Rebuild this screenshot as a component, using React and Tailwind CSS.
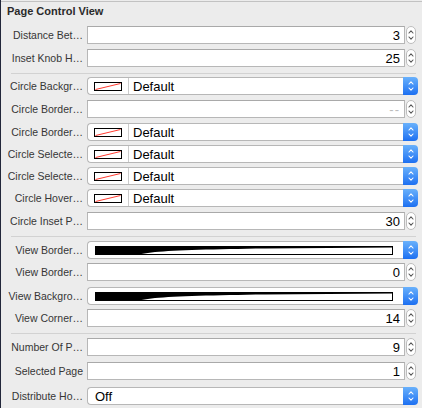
function Chevrons({ color = '#555', w = 6 }) {
  return (
    <svg width={w} height="12" viewBox="0 0 6 12" fill="none" stroke={color} strokeWidth="1.1" strokeLinecap="round" strokeLinejoin="round">
      <path d="M1 4 L3 1.8 L5 4" />
      <path d="M1 8 L3 10.2 L5 8" />
    </svg>
  )
}

function Label({ text }) {
  return (
    <div className="w-[86px] shrink-0 pr-[4px] text-right whitespace-nowrap text-[10.5px] leading-none text-[#363636]">
      {text}
    </div>
  )
}

function Stepper() {
  return (
    <div className="ml-px flex h-[18px] w-[10px] items-center justify-center rounded-full border border-[#bdbdbd] bg-white">
      <Chevrons w={6} />
    </div>
  )
}

function NumberRow({ label, value, placeholder, mt }) {
  return (
    <div className={`flex h-[18px] items-center ${mt}`}>
      <Label text={label} />
      <div className="flex h-[18px] w-[318px] items-center justify-end border border-[#b7b7b7] border-t-[#a9a9a9] bg-white pr-[4px] text-[13px] leading-none">
        {placeholder ? <span className="text-[#bcbcbc] tracking-[1px]">--</span> : <span className="text-black">{value}</span>}
      </div>
      <Stepper />
    </div>
  )
}

function BlueButton() {
  return (
    <div className="flex h-[18px] w-[15px] items-center justify-center rounded-r-[4px] bg-linear-to-b from-[#69b1fb] to-[#1c6ff1]">
      <Chevrons color="#ffffff" />
    </div>
  )
}

function Swatch() {
  return (
    <svg width="28" height="9" viewBox="0 0 28 9">
      <rect x="0.5" y="0.5" width="27" height="8" fill="#fff" stroke="#000" strokeWidth="1" />
      <line x1="1.5" y1="7.5" x2="26.5" y2="1.5" stroke="#ff3b30" strokeWidth="1" />
    </svg>
  )
}

function Wedge() {
  return (
    <svg width="298" height="9" viewBox="0 0 298 9">
      <rect x="0.5" y="0.5" width="297" height="8" fill="#fff" stroke="#000" strokeWidth="1" />
      <path d="M0 0 L298 0 L298 1.6 L170 2.4 C120 3 80 4 60 6 C50 7.5 42 9 36 9 L0 9 Z" fill="#000" />
    </svg>
  )
}

function PopupRow({ label, mt, type, text }) {
  return (
    <div className={`flex h-[18px] items-center ${mt}`}>
      <Label text={label} />
      <div className="flex h-[18px] w-[316px] items-center rounded-l-[4px] border border-r-0 border-[#b7b7b7] bg-white text-[13px] leading-none text-black">
        {type === 'color' && (
          <>
            <div className="ml-[6px] flex items-center"><Swatch /></div>
            <div className="ml-[6px] h-full w-px bg-[#cccccc]" />
            <span className="ml-[4px]">Default</span>
          </>
        )}
        {type === 'wedge' && (
          <div className="ml-[7px] flex items-center"><Wedge /></div>
        )}
        {type === 'text' && <span className="ml-[7px]">{text}</span>}
      </div>
      <BlueButton />
    </div>
  )
}

function Sep({ mt }) {
  return <div className={`ml-[10px] h-px w-[405px] bg-[#d2d2d2] ${mt}`} />
}

export default function App() {
  return (
    <div className="h-[408px] w-[422px] overflow-hidden border-l border-[#22273a] bg-[#ececec] font-['Liberation_Sans',Arial,sans-serif]">
      <div className="h-px" />
      <div className="h-px bg-[#c2c2c2]" />
      <div className="flex h-[19px] items-center pl-[6px] text-[11px] font-bold leading-none text-[#2a2a2a]">
        Page Control View
      </div>

      <NumberRow mt="mt-[5px]" label="Distance Bet…" value="3" />
      <NumberRow mt="mt-[5px]" label="Inset Knob H…" value="25" />
      <Sep mt="mt-[6px]" />
      <PopupRow mt="mt-[3px]" label="Circle Backgr…" type="color" />
      <NumberRow mt="mt-[5px]" label="Circle Border…" placeholder />
      <PopupRow mt="mt-[5px]" label="Circle Border…" type="color" />
      <PopupRow mt="mt-[4px]" label="Circle Selecte…" type="color" />
      <PopupRow mt="mt-[4px]" label="Circle Selecte…" type="color" />
      <PopupRow mt="mt-[4px]" label="Circle Hover…" type="color" />
      <NumberRow mt="mt-[5px]" label="Circle Inset P…" value="30" />
      <Sep mt="mt-[6px]" />
      <PopupRow mt="mt-[4px]" label="View Border…" type="wedge" />
      <NumberRow mt="mt-[4px]" label="View Border…" value="0" />
      <PopupRow mt="mt-[6px]" label="View Backgro…" type="wedge" />
      <NumberRow mt="mt-[4px]" label="View Corner…" value="14" />
      <Sep mt="mt-[6px]" />
      <NumberRow mt="mt-[4px]" label="Number Of P…" value="9" />
      <NumberRow mt="mt-[6px]" label="Selected Page" value="1" />
      <PopupRow mt="mt-[7px]" label="Distribute Ho…" type="text" text="Off" />
    </div>
  )
}
